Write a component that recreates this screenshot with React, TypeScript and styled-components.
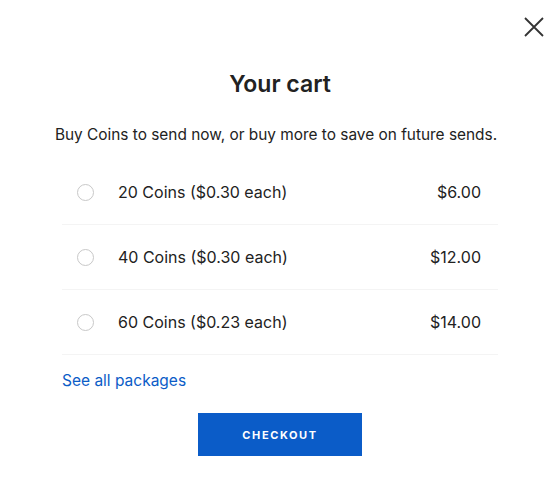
import React from "react";
import styled, { createGlobalStyle } from "styled-components";

const Global = createGlobalStyle`
  html, body { margin: 0; padding: 0; background: #fff; }
  body { font-family: Inter, "Open Sans", sans-serif; color: #222; -webkit-font-smoothing: antialiased; }
`;

const Modal = styled.div`
  width: 560px;
  height: 488px;
  position: relative;
  box-sizing: border-box;
  padding: 69px 62px 0 62px;
  display: flex;
  flex-direction: column;
`;

const Close = styled.button`
  position: absolute;
  top: 16px;
  right: 15px;
  width: 22px;
  height: 22px;
  padding: 0;
  border: none;
  background: none;
  cursor: pointer;
`;

const Title = styled.h1`
  margin: 0;
  text-align: center;
  font-size: 23px;
  font-weight: 600;
  line-height: 30px;
  color: #222;
`;

const Subtitle = styled.p`
  margin: 26px -16px 0 -24px;
  text-align: center;
  font-size: 15.4px;
  line-height: 20px;
  color: #222;
`;

const List = styled.div`
  margin-top: 15px;
  display: flex;
  flex-direction: column;
`;

const Row = styled.label`
  display: flex;
  align-items: center;
  height: 65px;
  box-sizing: border-box;
  border-bottom: 1px solid #f4f4f4;
  padding: 0 17px 0 15px;
  font-size: 16px;
  color: #222;
  cursor: pointer;
`;

const Radio = styled.span`
  width: 17px;
  height: 17px;
  border-radius: 50%;
  border: 1px solid #c8c8c8;
  box-sizing: border-box;
  flex: none;
  margin-right: 24px;
`;

const Label = styled.span`
  flex: 1;
`;

const Price = styled.span``;

const Link = styled.a`
  margin-top: 16px;
  font-size: 15.5px;
  line-height: 20px;
  color: #0b5cc7;
  text-decoration: none;
  align-self: flex-start;
`;

const Checkout = styled.button`
  margin-top: 22px;
  align-self: center;
  width: 164px;
  height: 43px;
  border: none;
  background: #0b5cc8;
  color: #fff;
  font-family: inherit;
  font-size: 11px;
  font-weight: 700;
  letter-spacing: 1.6px;
  cursor: pointer;
`;

const packages = [
  { label: "20 Coins ($0.30 each)", price: "$6.00" },
  { label: "40 Coins ($0.30 each)", price: "$12.00" },
  { label: "60 Coins ($0.23 each)", price: "$14.00" },
];

export default function App() {
  return (
    <>
      <Global />
      <Modal>
        <Close aria-label="Close">
          <svg width="22" height="22" viewBox="0 0 22 22">
            <path d="M2 2L20 20M20 2L2 20" stroke="#333" strokeWidth="1.8" strokeLinecap="butt" />
          </svg>
        </Close>
        <Title>Your cart</Title>
        <Subtitle>Buy Coins to send now, or buy more to save on future sends.</Subtitle>
        <List>
          {packages.map((p) => (
            <Row key={p.label}>
              <Radio />
              <Label>{p.label}</Label>
              <Price>{p.price}</Price>
            </Row>
          ))}
        </List>
        <Link href="#">See all packages</Link>
        <Checkout>CHECKOUT</Checkout>
      </Modal>
    </>
  );
}
